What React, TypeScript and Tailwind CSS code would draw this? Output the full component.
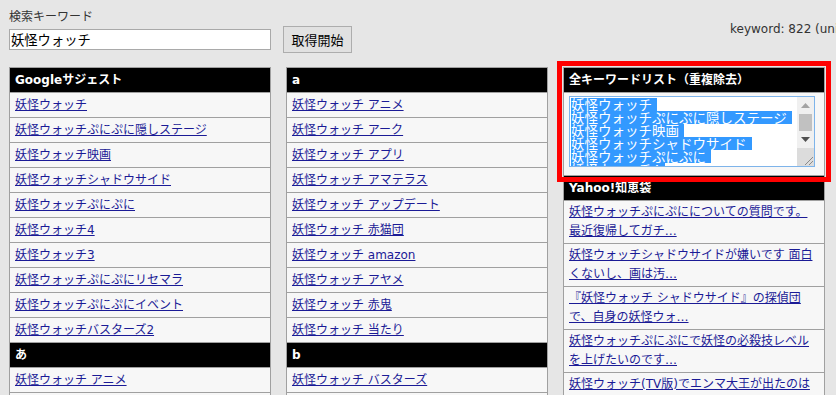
import React from "react";

const google = [
  "妖怪ウォッチ",
  "妖怪ウォッチぷにぷに隠しステージ",
  "妖怪ウォッチ映画",
  "妖怪ウォッチシャドウサイド",
  "妖怪ウォッチぷにぷに",
  "妖怪ウォッチ4",
  "妖怪ウォッチ3",
  "妖怪ウォッチぷにぷにリセマラ",
  "妖怪ウォッチぷにぷにイベント",
  "妖怪ウォッチバスターズ2",
];
const aList = [
  "妖怪ウォッチ アニメ",
  "妖怪ウォッチ アーク",
  "妖怪ウォッチ アプリ",
  "妖怪ウォッチ アマテラス",
  "妖怪ウォッチ アップデート",
  "妖怪ウォッチ 赤猫団",
  "妖怪ウォッチ amazon",
  "妖怪ウォッチ アヤメ",
  "妖怪ウォッチ 赤鬼",
  "妖怪ウォッチ 当たり",
];
const ahList = ["妖怪ウォッチ アニメ", "妖怪ウォッチ アーク", "妖怪ウォッチ アプリ"];
const bList = ["妖怪ウォッチ バスターズ", "妖怪ウォッチ バスターズ2", "妖怪ウォッチ バグ"];
const allLines = [
  "妖怪ウォッチ",
  "妖怪ウォッチぷにぷに隠しステージ",
  "妖怪ウォッチ映画",
  "妖怪ウォッチシャドウサイド",
  "妖怪ウォッチぷにぷに",
  "妖怪ウォッチ4",
];
const yahoo: [string, string][] = [
  ["妖怪ウォッチぷにぷにについての質問です。", "最近復帰してガチ…"],
  ["妖怪ウォッチシャドウサイドが嫌いです 面白", "くないし、画は汚…"],
  ["『妖怪ウォッチ シャドウサイド』の探偵団", "で、自身の妖怪ウォ…"],
  ["妖怪ウォッチぷにぷにで妖怪の必殺技レベル", "を上げたいのです…"],
  ["妖怪ウォッチ(TV版)でエンマ大王が出たのは", "いつですか…"],
];

function Header({ children }: { children: React.ReactNode }) {
  return (
    <div className="h-[25px] border-b border-[#a0a0a0] bg-black text-white font-bold text-[12px] leading-[24px] pl-[5px] whitespace-nowrap">
      {children}
    </div>
  );
}

function Row({ text }: { text: string }) {
  return (
    <div className="h-[25px] border-b border-[#a0a0a0] bg-[#f7f7f7] text-[12px] leading-[24px] pl-[5px] whitespace-nowrap">
      <a href="#" className="text-[#1b1b96] underline">
        {text}
      </a>
    </div>
  );
}

function Table({ children }: { children: React.ReactNode }) {
  return <div className="border-x border-t border-[#a0a0a0]">{children}</div>;
}

function FakeTextarea() {
  return (
    <div className="flex w-[246px] h-[71px] border border-[#7eb4ea] bg-white overflow-hidden">
      <div className="flex-1 overflow-hidden pl-px pt-px font-['Noto_Sans_CJK_JP',sans-serif] text-[13.5px] leading-[13px]">
        {allLines.map((l, i) => (
          <div key={i} className="h-[13px] whitespace-nowrap">
            <span className="inline-block h-[13px] bg-[#3399ff] text-white pr-[5px]">{l}</span>
          </div>
        ))}
      </div>
      <div className="w-[17px] shrink-0 flex flex-col bg-[#f0f0f0]">
        <div className="h-[17px] flex items-center justify-center">
          <svg width="9" height="5" viewBox="0 0 9 5">
            <polygon points="4.5,0 9,5 0,5" fill="#a3a3a3" />
          </svg>
        </div>
        <div className="h-[17px] flex justify-center">
          <div className="w-[13px] h-full bg-[#c1c1c1]" />
        </div>
        <div className="h-[17px] flex items-center justify-center">
          <svg width="9" height="5" viewBox="0 0 9 5">
            <polygon points="0,0 9,0 4.5,5" fill="#505050" />
          </svg>
        </div>
        <div className="flex-1 bg-[#dcdcdc] flex items-end justify-end">
          <svg width="12" height="12" viewBox="0 0 12 12">
            <line x1="11" y1="3" x2="3" y2="11" stroke="#8a8a8a" strokeWidth="1" />
            <line x1="11" y1="7" x2="7" y2="11" stroke="#8a8a8a" strokeWidth="1" />
          </svg>
        </div>
      </div>
    </div>
  );
}

export default function App() {
  return (
    <div className="w-[836px] h-[395px] overflow-hidden bg-[#e6e6e6] px-[9px] pt-[10px] font-['DejaVu_Sans','Noto_Sans_CJK_JP',sans-serif] text-[#333]">
      <div className="flex items-start">
        <div className="shrink-0">
          <div className="text-[12px] leading-[14px] h-[14px]">検索キーワード</div>
          <div className="flex items-center mt-[2px] h-[27px]">
            <input
              readOnly
              defaultValue="妖怪ウォッチ"
              className="w-[262px] h-[21px] border border-[#a9a9a9] bg-white pl-px text-[13.3px] text-black outline-none font-['Noto_Sans_CJK_JP',sans-serif]"
            />
            <button className="ml-[12px] w-[69px] h-[27px] border border-[#adadad] bg-[#e1e1e1] text-[13px] text-black font-['Noto_Sans_CJK_JP',sans-serif]">
              取得開始
            </button>
          </div>
        </div>
        <span className="ml-[378px] mt-[12px] shrink-0 whitespace-nowrap text-[12px] leading-[14px] text-[#333]">
          keyword: 822 (unique: 822)
        </span>
      </div>

      <div className="flex gap-[15px] mt-[14px] items-start">
        <div className="w-[262px] shrink-0">
          <Table>
            <Header>Googleサジェスト</Header>
            {google.map((t, i) => (
              <Row key={i} text={t} />
            ))}
            <Header>あ</Header>
            {ahList.map((t, i) => (
              <Row key={i} text={t} />
            ))}
          </Table>
        </div>

        <div className="w-[262px] shrink-0">
          <Table>
            <Header>a</Header>
            {aList.map((t, i) => (
              <Row key={i} text={t} />
            ))}
            <Header>b</Header>
            {bList.map((t, i) => (
              <Row key={i} text={t} />
            ))}
          </Table>
        </div>

        <div className="w-[262px] shrink-0">
          <div className="relative z-10 border-x border-t border-[#a0a0a0] outline-solid outline-[5px] outline-[#ff0000] outline-offset-[1px]">
            <Header>全キーワードリスト（重複除去）</Header>
            <div className="h-[83px] border-b border-[#a0a0a0] bg-[#f7f7f7] pl-[5px] pt-[3px]">
              <FakeTextarea />
            </div>
          </div>
          <div className="border-x border-[#a0a0a0]">
            <Header>Yahoo!知恵袋</Header>
            {yahoo.map(([a, b], i) => (
              <div
                key={i}
                className="h-[43px] border-b border-[#a0a0a0] bg-[#f7f7f7] px-[5px] py-[2px] text-[12px] leading-[19px] whitespace-nowrap"
              >
                <a href="#" className="text-[#1b1b96] underline">
                  {a}
                  <br />
                  {b}
                </a>
              </div>
            ))}
          </div>
        </div>
      </div>
    </div>
  );
}
